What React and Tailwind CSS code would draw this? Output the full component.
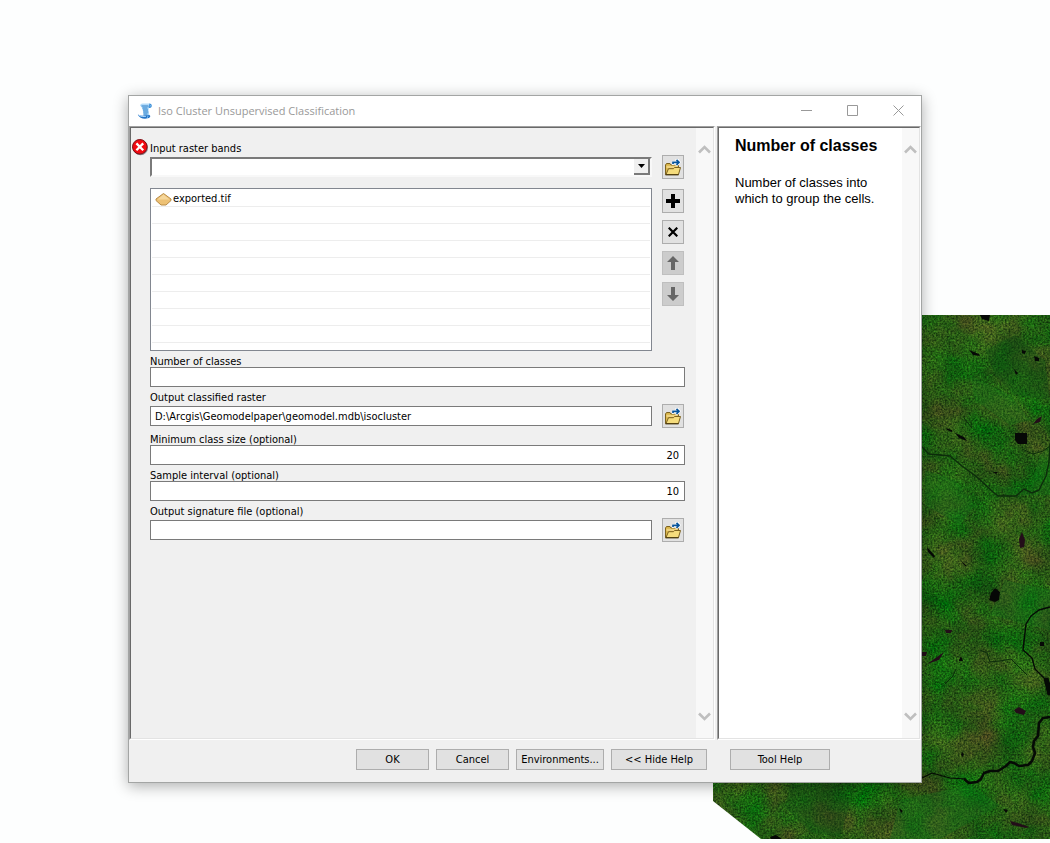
import React from "react";

const uiFont = "font-['DejaVu_Sans_Condensed','Noto_Sans',sans-serif]";

function MapRaster() {
  return (
    <svg
      className="absolute right-0 bottom-1 h-[524px] w-[337px]"
      viewBox="713 315 337 524"
      aria-hidden="true"
    >
      <defs>
        <filter id="terrain" x="0" y="0" width="100%" height="100%" colorInterpolationFilters="sRGB">
          <feTurbulence type="fractalNoise" baseFrequency="0.026" numOctaves="6" seed="23" result="a" />
          <feColorMatrix
            in="a"
            type="matrix"
            values="0.36 0 0 0 -0.03  -0.06 0.2 0 0 0.29  0.1 0 0 0 0.03  0 0 0 0 1"
            result="low"
          />
          <feTurbulence type="fractalNoise" baseFrequency="0.55" numOctaves="2" seed="4" result="b" />
          <feColorMatrix
            in="b"
            type="matrix"
            values="0.9 0 0 0 0.05  0.7 0 0 0 0.15  0.7 0 0 0 0.15  0 0 0 0 1"
            result="high"
          />
          <feComposite in="low" in2="high" operator="arithmetic" k1="2" k2="0" k3="0" k4="0" />
        </filter>
        <clipPath id="extent">
          <path d="M713 315H1050V839H761L713 801Z" />
        </clipPath>
      </defs>
      <g clipPath="url(#extent)">
        <rect x="713" y="315" width="337" height="524" fill="#245717" filter="url(#terrain)" />
        <g fill="#0b4a10" opacity="0.35">
          <path d="M985 350l30 -15 30 25 5 40 -35 -5 -20 -20z" />
          <path d="M790 785l45 -3 15 20 -10 35 -30 -5 -25 -25z" />
        </g>
        <g fill="#12761a" opacity="0.3">
          <path d="M970 375l40 20 20 25 -20 5 -35 -25z" />
          <path d="M1040 455l10 -10v50l-45 0 -5 -8 30 2z" />
          <path d="M925 470l30 10 20 25 -15 20 -35 -20z" />
          <path d="M1005 580l45 10v40l-60 -15z" />
          <path d="M900 800l70 -15 30 20 -60 34h-50z" />
        </g>
        <g fill="none" stroke="#0c2c0b" strokeLinejoin="round">
          <path strokeWidth="1.4" d="M921 446l8 8 21 2 12 10 15 11 16 15 5 4 18 0 8-7 8 4 7-3 7-14 3-14 1-18" />
          <path strokeWidth="1" d="M980 650l7 3 3 9 10-1 11-2 16 16" />
          <path strokeWidth="1" d="M1022 449l11 5 10-3 7-5" />
          <path strokeWidth="1" d="M964 418l8 10" />
          <path strokeWidth="1" d="M945 684l8-8 3-7" />
        </g>
        <g fill="none" stroke="#050a05" strokeLinejoin="round">
          <path strokeWidth="1.4" d="M1050 607l-11 3-8 6-5 8-3 26 9 8 3 11 8 8 7 7" />
          <path strokeWidth="1.2" d="M922 778l10-5 18 5 16 1" />
          <path
            strokeWidth="2.600"
            d="M964 779l5 4 8-1 4-3 3-6 6-2 8 0 8-5 4-4 4 1 5 3 9-1 4-4 3-8-2-6 1-6 4-5 1-13 4-5 7-1"
          />
          <path strokeWidth="5" d="M1046 678l4 17" />
        </g>
        <g fill="#060806">
          <path d="M1015 433h12v11h-9l-3-4z" />
          <path d="M995 588l5 4 -1 8 -4 2 -6 -2 2 -7z" />
          <path d="M980 315h10l-1 6 -7-2z" />
          <path d="M969 350l10 4 1 2 -7-1z" />
          <path d="M1034 356l5 2 0 3 -4 0z" />
          <path d="M1014 369l4 4 -2 2z" />
          <path d="M1022 350l4 1 -1 3 -3-1z" />
          <path d="M955 433l9 4 3 4 -8-3z" />
          <path d="M946 428l6 2 0 2 -5-2z" />
          <path d="M993 472l5 0 -2 2z" />
          <path d="M927 547l8 9 -1 2 -6-6z" />
          <path d="M960 560l7 6 -2 0z" />
          <path d="M959 660l2-4 2 5 -4 0z" />
          <path d="M1040 642h4v4h-4z" />
          <path d="M770 837l6-2 6 4h-11z" />
          <path d="M899 808l4 3 -2 2z" />
          <path d="M1003 809l5 1 -2 3z" />
          <path d="M962 752l2 2 -1 3 -2-2z" />
        </g>
        <g fill="#230d19">
          <path d="M1022 532l3 8 -1 7 -4 1 -1-9z" />
          <path d="M1014 710l5-3 7 4 -2 4 -8-2z" />
          <path d="M1010 821l8 2 11 4 -3 1 -14-3z" />
          <path d="M927 664l10-7 7-5 -5 8 -9 3z" />
          <path d="M921 652l6 0 -1 4 -5 0z" />
          <path d="M1042 416l-2 6 -7 2 4-5z" />
          <path d="M945 630l7 0 -1 3 -5 0z" />
        </g>
      </g>
    </svg>
  );
}

function ScriptIcon() {
  return (
    <svg width="16" height="16" viewBox="0 0 16 16" aria-hidden="true">
      <path d="M4 2.500L12 3l-.5 5 1 5H6.500L6 8z" fill="#a9d8fa" />
      <path d="M3 2.500Q3.500.8 5.500.6L13 .5 11.500 3 4 3.500z" fill="#b5dcfa" />
      <path d="M12.500.5Q14.800.3 14.800 3q-.3 2-2.300 2l-1-.5z" fill="#2f86d3" />
      <path d="M13 1.500q1 .3.500 2l-1 .2z" fill="#9ed2fa" />
      <path d="M4.500 3h7M5.500 5h5M6 7h5M6.300 9h5M6.500 11h4" stroke="#2e7ec6" strokeWidth="1" />
      <path d="M.8 11.500Q4 13.500 9 12l4 .2q1 1.800-1 2.800L8 15.800Q3 15.800.8 11.500z" fill="#2373c6" />
      <path d="M2 12.500q3.500 1.600 7 .7" stroke="#b9e0ff" fill="none" />
      <path d="M10 12.500q1.500.8.3 2.300" stroke="#8ccbfa" fill="none" />
    </svg>
  );
}

function ErrorIcon() {
  return (
    <svg className="mt-px ml-px shrink-0" width="17" height="17" viewBox="0 0 17 17" role="img" aria-label="Error">
      <circle cx="8.500" cy="8.800" r="7.500" fill="#8b8b93" />
      <circle cx="7.800" cy="7.800" r="7.300" fill="#f00a12" stroke="#7d0b12" strokeWidth="1" />
      <path d="M4.400 4.400l6.800 6.800M11.200 4.400l-6.800 6.800" stroke="#fff" strokeWidth="2.300" />
    </svg>
  );
}

function FolderIcon() {
  return (
    <svg className="mt-px" width="18" height="18" viewBox="0 0 18 18" aria-hidden="true">
      <path d="M1.500 15.500V6l1-1.500h3.500l1 1.500h7.500v9.500z" fill="#d9b64c" stroke="#7c6220" strokeWidth="1" />
      <path d="M2.500 6.800h11V9h-11z" fill="#efd380" />
      <path d="M2 15.500L4.500 9.700h5l1-1.200h6L14.500 15.500z" fill="#f5dc7c" stroke="#7c6220" strokeWidth="1" />
      <path d="M1.500 15.800h13" stroke="#4a3a10" strokeWidth="1.200" />
      <path d="M8 6V2h3.500V0h3L17 3.200 14 6.800h-2.500V5.500z" fill="#fff" />
      <path d="M9 5V3.300h6.500M12.500.8L15 3.300l-2.500 2.500" fill="none" stroke="#07549c" strokeWidth="1.700" />
    </svg>
  );
}

function SideButton({ label, disabled, children }) {
  return (
    <button
      type="button"
      aria-label={label}
      disabled={disabled}
      className="flex h-6 w-[22px] shrink-0 items-center justify-center border border-[#adadad] bg-[#e1e1e1] disabled:bg-[#cccccc] disabled:border-[#bfbfbf]"
    >
      {children}
    </button>
  );
}

function ScrollBar() {
  return (
    <div className="flex w-[17px] shrink-0 flex-col items-center justify-between bg-[#f8f8f8] py-4" aria-hidden="true">
      <svg width="13" height="10" viewBox="0 0 13 10">
        <path d="M1 8.500l5.500-5.500 5.500 5.500" fill="none" stroke="#bfbfbf" strokeWidth="2.600" />
      </svg>
      <svg width="13" height="10" viewBox="0 0 13 10">
        <path d="M1 1.500l5.500 5.500 5.500-5.500" fill="none" stroke="#bfbfbf" strokeWidth="2.600" />
      </svg>
    </div>
  );
}

function Panel({ className, children }) {
  return (
    <div className={`flex border border-t-[#a0a0a0] border-r-white border-b-white border-l-[#a0a0a0] ${className}`}>
      <div className="flex min-w-0 flex-1 border border-t-[#696969] border-r-[#e3e3e3] border-b-[#e3e3e3] border-l-[#696969]">
        {children}
      </div>
    </div>
  );
}

function Field({ id, label, value = "", browse, numeric }) {
  const input = (
    <input
      id={id}
      type="text"
      defaultValue={value}
      className={`h-5 w-full min-w-0 border border-[#7a7a7a] bg-white outline-none ${numeric ? "pr-[5px] text-right" : "pl-1"}`}
    />
  );
  return (
    <div className="flex flex-col">
      <label htmlFor={id} className="h-4 pt-1 leading-[14px]">
        {label}
      </label>
      {browse ? (
        <div className="flex items-center gap-[10px] py-px pr-px">
          {input}
          <SideButton label={`Browse ${label}`}>
            <FolderIcon />
          </SideButton>
        </div>
      ) : (
        input
      )}
    </div>
  );
}

function FooterButton({ className, children }) {
  return (
    <button type="button" className={`h-[21px] border border-[#adadad] bg-[#e1e1e1] pt-[2px] text-center ${className}`}>
      {children}
    </button>
  );
}

export default function App() {
  return (
    <main
      className={`relative flex min-h-screen flex-col overflow-hidden bg-[#fdfefe] px-32 pt-[95px] pb-[60px] text-[11px] text-black ${uiFont}`}
    >
      <MapRaster />
      <section
        aria-label="Iso Cluster Unsupervised Classification"
        className="relative flex flex-1 flex-col border border-[#a3a5a4] bg-[#f0f0f0] shadow-[0_3px_14px_rgba(0,0,0,0.32)]"
      >
        <header className="flex h-[30px] items-center bg-white pl-2 text-[#999999]">
          <ScriptIcon />
          <h1 className="ml-[5px] flex-1 font-['Open_Sans',sans-serif] text-[11px]">
            Iso Cluster Unsupervised Classification
          </h1>
          <button type="button" aria-label="Minimize" className="flex w-[46px] justify-center pb-px">
            <svg width="11" height="11" viewBox="0 0 11 11">
              <path d="M0 5.500h11" stroke="currentColor" />
            </svg>
          </button>
          <button type="button" aria-label="Maximize" className="flex w-[46px] justify-center pb-px">
            <svg width="11" height="11" viewBox="0 0 11 11">
              <path d="M.5.5h10v10H.5z" fill="none" stroke="currentColor" />
            </svg>
          </button>
          <button type="button" aria-label="Close" className="flex w-[46px] justify-center pb-px">
            <svg width="11" height="11" viewBox="0 0 11 11">
              <path d="M.5.5l10 10M10.500.5l-10 10" stroke="currentColor" />
            </svg>
          </button>
        </header>

        <div className="flex flex-1 gap-[2px]">
          <Panel className="min-w-0 flex-1">
            <div className="flex w-[19px] shrink-0 pt-[10px]">
              <ErrorIcon />
            </div>
            <form className="flex min-w-0 flex-1 flex-col pt-[10px] pr-[11px]">
              <label htmlFor="bands" className="h-4 pt-1 leading-[14px]">
                Input raster bands
              </label>
              <div className="flex items-center gap-[10px] py-px pr-px">
                <div className="relative flex h-5 flex-1 border-2 border-t-[#7a7a7a] border-r-[#f8f8f8] border-b-[#f8f8f8] border-l-[#7a7a7a] bg-white">
                  <select id="bands" className="w-full appearance-none bg-white outline-none">
                    <option></option>
                  </select>
                  <span className="pointer-events-none absolute top-0 right-0 flex h-4 w-4 items-center justify-center border-r-2 border-b-2 border-[#7a7a7a] bg-[#f0f0f0]">
                    <svg width="7" height="4" viewBox="0 0 7 4">
                      <path d="M0 0h7L3.500 4z" fill="#000" />
                    </svg>
                  </span>
                </div>
                <SideButton label="Browse Input raster bands">
                  <FolderIcon />
                </SideButton>
              </div>

              <div className="mt-2 flex gap-[10px] pr-px">
                <ul className="h-[163px] min-w-0 flex-1 overflow-hidden border border-[#828790] bg-white pr-px pl-px">
                  <li className="flex h-[18px] items-center border-b border-[#ededed] pt-[3px] pl-[3px]">
                    <svg width="17" height="13" viewBox="0 0 17 13" aria-hidden="true">
                      <path d="M8.500.5l7.500 5.500v1.500l-5 4.500h-5l-5-4.500V6z" fill="#edc174" stroke="#b98b45" strokeWidth="1" />
                      <path d="M8.500 1.500l6 5H2.500z" fill="#f6d79b" />
                    </svg>
                    <span className="ml-px">exported.tif</span>
                  </li>
                  {[1, 2, 3, 4, 5, 6, 7, 8].map((row) => (
                    <li key={row} className="h-[17px] border-b border-[#ededed]" />
                  ))}
                </ul>
                <div className="flex flex-col gap-[7px] pt-px">
                  <SideButton label="Add">
                    <svg width="14" height="14" viewBox="0 0 14 14">
                      <path d="M7 0v14M0 7h14" stroke="#000" strokeWidth="4" />
                    </svg>
                  </SideButton>
                  <SideButton label="Remove">
                    <svg width="10" height="10" viewBox="0 0 10 10">
                      <path d="M.7.700l8.600 8.600M9.300.700L.7 9.300" stroke="#000" strokeWidth="2.200" />
                    </svg>
                  </SideButton>
                  <SideButton label="Move up" disabled>
                    <svg width="12" height="14" viewBox="0 0 12 14">
                      <path d="M6 0l6 6H8v8H4V6H0z" fill="#666" />
                    </svg>
                  </SideButton>
                  <SideButton label="Move down" disabled>
                    <svg width="12" height="14" viewBox="0 0 12 14">
                      <path d="M6 14l6-6H8V0H4v8H0z" fill="#666" />
                    </svg>
                  </SideButton>
                </div>
              </div>

              <Field id="classes" label="Number of classes" />
              <Field
                id="raster"
                label="Output classified raster"
                value={"D:\\Arcgis\\Geomodelpaper\\geomodel.mdb\\isocluster"}
                browse
              />
              <Field id="minimum" label="Minimum class size (optional)" value="20" numeric />
              <Field id="interval" label="Sample interval (optional)" value="10" numeric />
              <Field id="signature" label="Output signature file (optional)" browse />
            </form>
            <ScrollBar />
          </Panel>

          <Panel className="w-[204px] shrink-0 bg-white">
            <article className="min-w-0 flex-1 pt-2 pl-4 font-['Liberation_Sans',sans-serif] text-[13px] leading-4">
              <h2 className="text-[16px] leading-5 font-bold whitespace-nowrap">Number of classes</h2>
              <p className="mt-[19px]">Number of classes into which to group the cells.</p>
            </article>
            <ScrollBar />
          </Panel>
        </div>

        <footer className="flex h-[42px] gap-[7px] pt-[9px] pr-[91px] pl-2">
          <FooterButton className="ml-auto w-[73px]">OK</FooterButton>
          <FooterButton className="w-[73px]">Cancel</FooterButton>
          <FooterButton className="w-[88px]">Environments...</FooterButton>
          <FooterButton className="w-[96px]">&lt;&lt; Hide Help</FooterButton>
          <FooterButton className="ml-4 w-[100px]">Tool Help</FooterButton>
        </footer>
      </section>
    </main>
  );
}
